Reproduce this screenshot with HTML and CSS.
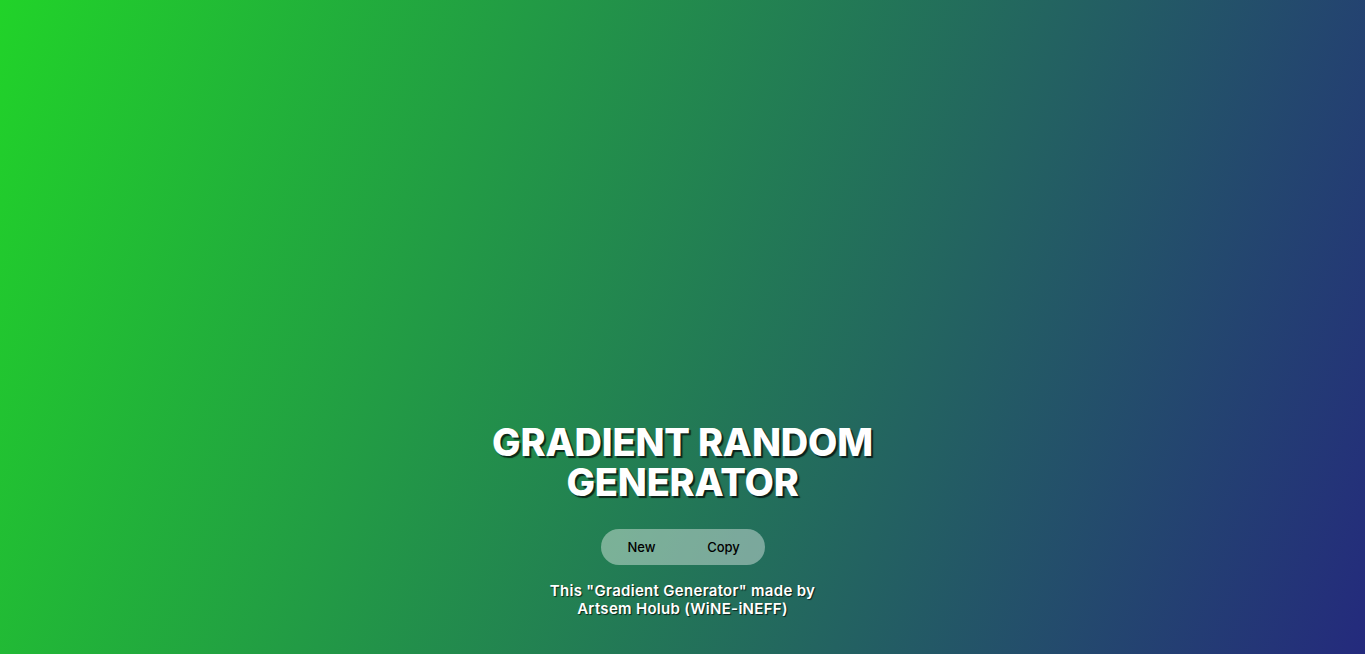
FILE: index.html
```html
<!DOCTYPE html>
<html lang="en">
<head>
<meta charset="utf-8">
<title>Gradient Random Generator</title>
<link rel="stylesheet" href="styles.css">
</head>
<body>
<main class="page">
  <h1 class="title">GRADIENT RANDOM<br>GENERATOR</h1>
  <div class="controls">
    <button class="btn" type="button">New</button>
    <button class="btn" type="button">Copy</button>
  </div>
  <p class="credit">This "Gradient Generator" made by<br>Artsem Holub (WiNE-iNEFF)</p>
</main>
</body>
</html>
```
FILE: styles.css
```css
html, body {
  margin: 0;
  padding: 0;
  height: 100%;
}
body {
  background: linear-gradient(110deg, #21d329 0%, #242a7d 100%);
  font-family: Inter, "Noto Sans", sans-serif;
  color: #fff;
}
.page {
  min-height: 100vh;
  box-sizing: border-box;
  display: flex;
  flex-direction: column;
  align-items: center;
  justify-content: flex-end;
  padding-bottom: 36px;
  text-align: center;
}
.title {
  margin: 0;
  font-size: 38px;
  line-height: 40px;
  font-weight: 800;
  letter-spacing: -0.2px;
  text-shadow: 2px 2px 1px rgba(0, 0, 0, 0.7);
}
.controls {
  margin-top: 27px;
  display: flex;
  background: rgba(255, 255, 255, 0.4);
  border-radius: 18px;
  height: 36px;
}
.btn {
  background: transparent;
  border: 0;
  width: 82px;
  font-family: Inter, "Noto Sans", sans-serif;
  font-size: 13px;
  font-weight: 500;
  color: #000;
  padding: 0;
}
.credit {
  margin: 17px 0 0;
  font-size: 15px;
  line-height: 18px;
  font-weight: 600;
  letter-spacing: 0.3px;
  text-shadow: 1px 1px 1px rgba(0, 0, 0, 0.7);
}
```
